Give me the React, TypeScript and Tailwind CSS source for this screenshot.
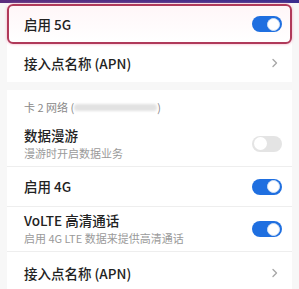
const Toggle = ({ on }: { on: boolean }) => (
    <div
        className={`w-[30px] h-[16px] rounded-full flex items-center px-[2px] ${on ? 'bg-[#1f6fe0] justify-end' : 'bg-[#e4e4e4] justify-start'}`}
    >
        <div className={`w-[13px] h-[13px] rounded-full bg-white ${on ? 'border border-[#cfe0f5]' : ''}`} />
    </div>
);

const Chevron = () => (
    <svg width="8" height="10" viewBox="0 0 8 10" fill="none" className="mr-[3px]">
        <path d="M2 1.5L5.5 5L2 8.5" stroke="#a8a8a8" strokeWidth="1.4" strokeLinecap="round" strokeLinejoin="round" />
    </svg>
);

const App = () => {
    return (
        <div
            className="w-[299px] h-[289px] bg-[#f7f7f7] overflow-hidden relative"
            style={{ fontFamily: '"Noto Sans CJK SC", "Noto Sans", sans-serif' }}
        >
            <div className="h-[3px] bg-gradient-to-r from-[#5b2d7e] to-[#3b2d8e]" />
            {/* first group */}
            <div className="bg-white mx-[7px]">
                <div className="mt-[1px] h-[40px] border-2 border-[#b03a5a] rounded-[6px] shadow-[0_0_3px_#f2a8bf] bg-gradient-to-b from-[#fff6f8] to-white flex items-center justify-between pl-[15px] pr-[8px]">
                    <span className="text-[13.5px] text-[#222] font-medium">启用 5G</span>
                    <Toggle on />
                </div>
                <div className="h-[38px] flex items-center justify-between pl-[17px] pr-[10px]">
                    <span className="text-[13.5px] text-[#222] font-medium">接入点名称 (APN)</span>
                    <Chevron />
                </div>
            </div>
            <div className="h-[8px]" />
            {/* second group */}
            <div className="bg-white mx-[7px]">
                <div className="h-[29px] flex items-center pl-[17px] pt-[5px]">
                    <span className="text-[11px] text-[#888]">卡 2 网络 (</span>
                    <span className="inline-block w-[83px] h-[7px] bg-[#e2e2e2] rounded-sm blur-[1px]" />
                    <span className="text-[11px] text-[#888]">)</span>
                </div>
                <div className="h-[48px] flex items-center justify-between pl-[17px] pr-[10px] border-b border-[#eeeeee] pt-[2px]">
                    <div className="flex flex-col">
                        <span className="text-[13.5px] text-[#222] font-medium leading-[19px]">数据漫游</span>
                        <span className="text-[11px] text-[#9a9a9a] leading-[17px]">漫游时开启数据业务</span>
                    </div>
                    <Toggle on={false} />
                </div>
                <div className="h-[40px] flex items-center justify-between pl-[17px] pr-[10px] border-b border-[#eeeeee]">
                    <span className="text-[13.5px] text-[#222] font-medium">启用 4G</span>
                    <Toggle on />
                </div>
                <div className="h-[45px] flex items-center justify-between pl-[17px] pr-[10px] border-b border-[#eeeeee]">
                    <div className="flex flex-col">
                        <span className="text-[13.5px] text-[#222] font-medium leading-[19px]">VoLTE 高清通话</span>
                        <span className="text-[11px] text-[#9a9a9a] leading-[17px]">启用 4G LTE 数据来提供高清通话</span>
                    </div>
                    <Toggle on />
                </div>
                <div className="h-[42px] flex items-center justify-between pl-[17px] pr-[10px]">
                    <span className="text-[13.5px] text-[#222] font-medium">接入点名称 (APN)</span>
                    <Chevron />
                </div>
            </div>
        </div>
    );
};

export default App;
